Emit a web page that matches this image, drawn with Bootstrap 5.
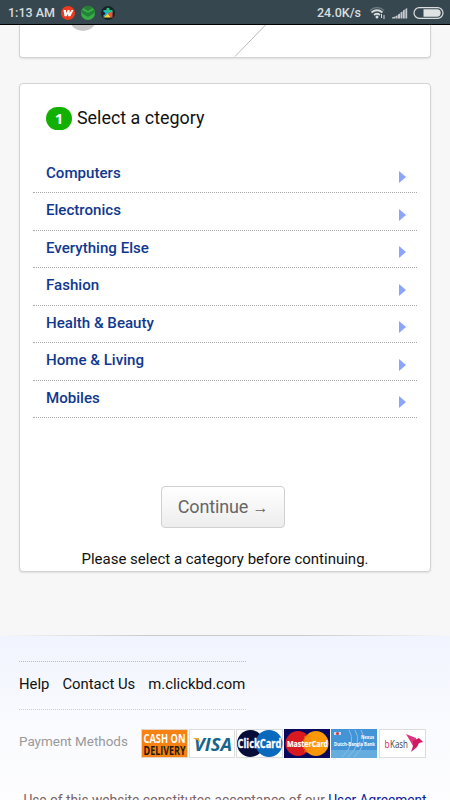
<!DOCTYPE html>
<html lang="en">
<head>
<meta charset="utf-8">
<meta name="viewport" content="width=device-width, initial-scale=1">
<title>ClickBD - Select a category</title>
<link href="https://cdn.jsdelivr.net/npm/bootstrap@5.3.0/dist/css/bootstrap.min.css" rel="stylesheet">
<style>
body{font-family:Roboto,"Liberation Sans",sans-serif;background:#f7f7f7;color:#111;height:800px;font-size:15px;line-height:20px}
a{text-decoration:none}
.status{height:25px;background:#37474f;border-bottom:1px solid #000;color:#d9dddf;font-size:12.5px;font-weight:500;padding:1px 6px 0 8px}
.status svg{display:block;flex:none}
.clock{width:47px;white-space:nowrap;margin-right:6px}
.panel{background:#fff;border:1px solid #d3d3d3;border-radius:4px;margin:0 19px;box-shadow:0 1px 2px rgba(0,0,0,.1)}
.panel-top{height:33px;border-top:0;border-radius:0 0 4px 4px}
.panel-top svg{display:block}
.panel-main{height:489px;margin-top:25px}
.heading{height:34px;padding:0;margin:17px 0 0 26px;font-size:17.9px;font-weight:400}
.step{width:26px;height:23px;border-radius:12px;background:#12b000;color:#fff;font-family:"Open Sans",sans-serif;font-size:15px;font-weight:700;margin-right:5px}
.cats{margin:20.500px 13px 0}
.cat{height:37.5px;border-bottom:1px dotted #aaa;padding:0 11px 2px 13px;color:#10388f;font-size:15.1px;font-weight:500}
.cat svg{margin-top:9px}
.go{width:124px;height:42px;margin:67.500px auto 0 141px;display:block;border:1px solid #d0d0d0;border-radius:4px;background:linear-gradient(#fff,#ededed);color:#666;font-size:18px;padding:0 0 1px;letter-spacing:-.15px}
.go small{font-size:16px}
.hint{margin-top:21px;font-size:15px}
.foot{margin-top:63px;height:165px;background:linear-gradient(#f0f4fe,#f9fafe 50%,#fdfdfe);padding:0 19px}
.edge{height:1px;margin:0 -19px;background:linear-gradient(90deg,#f7f7f7,#c9cbca 33%,#c9cbca 67%,#f7f7f7)}
.links{width:227px;height:49px;margin-top:25px;padding-bottom:3px;border-top:1px dotted #bbb;border-bottom:1px dotted #ccc;gap:13px;white-space:nowrap;font-size:14.85px}
.links a{color:#111}
.pay{margin-top:19px;height:30px;color:#999;font-size:13.45px}
.pay span{padding-bottom:5px}
.pay svg{display:block;margin-left:auto;margin-right:4px}
.terms{margin-top:31px;color:#7b6468;white-space:nowrap;font-size:13.73px;text-align:center}
.terms a{color:#0a1a9c;text-decoration:underline}
</style>
</head>
<body class="d-flex flex-column overflow-hidden">
<header class="status d-flex align-items-center flex-shrink-0">
  <span class="clock">1:13 AM</span>
  <svg width="56" height="16" viewBox="0 0 56 16">
    <circle cx="7" cy="8" r="7" fill="#e93b1f"/><path d="M2.500 5h2.500l.1 3.200L6.800 5h1.700l.2 3.200L10.300 5H12.500l-3.100 6.200H7.200L7 8.500l-1.400 2.700H3.500z" fill="#fff"/>
    <circle cx="27" cy="8" r="7" fill="#36ad45"/><path d="M20.500 4.500 27 8l6.500-3.500V8L27 12l-6.500-4z" fill="#238239"/><path d="M22 2.800 27 6l5-3.200A7 7 0 0 0 22 2.800" fill="#287c35"/>
    <circle cx="47" cy="8" r="7" fill="#172326"/><path d="M42.500 5h3c-1-3 4-3 3 0h3v3l-5 1z" fill="#23c489"/><path d="M42.500 5l4.500 3.500-4.500 4V10c2.500 0 2.500-3 0-3z" fill="#28b4f4"/><path d="M42.500 12.500 47 8.500l3 4z" fill="#fbd536"/><path d="M47 8.500l4.500-2v6H50z" fill="#f15143"/>
  </svg>
  <span class="ms-auto">24.0K/s</span>
  <svg width="75" height="16" viewBox="0 0 75 16" class="ms-2" fill="none">
    <path d="M1 5.500q7-6 14 0" stroke="#69767c" stroke-width="1.500"/><path d="M2.500 7.500q5.500-4.500 11 0M5 10q3-2.500 6 0" stroke="#d9dddf" stroke-width="1.700"/><circle cx="8" cy="12" r="1.500" fill="#d9dddf"/><path d="M12.500 9v4M15 10v4" stroke="#d9dddf"/>
    <path d="M23 13.500V12.500l3-1v2zm3.400 0v-2.200l2.200-1v3.200zm2.600 0V9.500l2-1v5zm2.500 0V7.500l2-1v7zm2.500 0V5.500l1.800-1v9zm2.400 0V4l1.800-1v10.500z" fill="#c5cacd"/>
    <rect x="45" y="2.700" width="29" height="10.600" rx="5.300" stroke="#d9dddf" stroke-width="1.200"/><path d="M54.500 4.300H68a3.700 3.700 0 0 1 0 7.400H54.500z" fill="#e0e3e4"/>
  </svg>
</header>
<main>
  <section class="panel panel-top">
    <svg width="410" height="32" viewBox="0 0 410 32"><ellipse cx="63" cy="-4" rx="12.500" ry="10" fill="#c8c8c8"/><path d="M215 31.500 246-.5" stroke="#bbb"/></svg>
  </section>
  <section class="panel panel-main">
    <h1 class="heading d-flex align-items-center mb-0"><span class="step d-flex align-items-center justify-content-center">1</span>Select a ctegory</h1>
    <nav class="cats">
      <a href="#" class="cat d-flex align-items-center justify-content-between">Computers<svg width="7" height="12"><path d="M0 0 7 6 0 12z" fill="#8ba5ff"/></svg></a>
      <a href="#" class="cat d-flex align-items-center justify-content-between">Electronics<svg width="7" height="12"><path d="M0 0 7 6 0 12z" fill="#8ba5ff"/></svg></a>
      <a href="#" class="cat d-flex align-items-center justify-content-between">Everything Else<svg width="7" height="12"><path d="M0 0 7 6 0 12z" fill="#8ba5ff"/></svg></a>
      <a href="#" class="cat d-flex align-items-center justify-content-between">Fashion<svg width="7" height="12"><path d="M0 0 7 6 0 12z" fill="#8ba5ff"/></svg></a>
      <a href="#" class="cat d-flex align-items-center justify-content-between">Health &amp; Beauty<svg width="7" height="12"><path d="M0 0 7 6 0 12z" fill="#8ba5ff"/></svg></a>
      <a href="#" class="cat d-flex align-items-center justify-content-between">Home &amp; Living<svg width="7" height="12"><path d="M0 0 7 6 0 12z" fill="#8ba5ff"/></svg></a>
      <a href="#" class="cat d-flex align-items-center justify-content-between">Mobiles<svg width="7" height="12"><path d="M0 0 7 6 0 12z" fill="#8ba5ff"/></svg></a>
    </nav>
    <button type="button" class="btn go">Continue <small>→</small></button>
    <p class="hint text-center mb-0">Please select a category before continuing.</p>
  </section>
</main>
<footer class="foot flex-shrink-0">
  <div class="edge"></div>
  <nav class="links d-flex align-items-center"><a href="#">Help</a><a href="#">Contact Us</a><a href="#">m.clickbd.com</a></nav>
  <div class="pay d-flex align-items-center"><span class="text-nowrap">Payment Methods</span>
    <svg width="286" height="30" viewBox="0 0 286 30" font-family="Open Sans, sans-serif" font-weight="700">
      <rect x=".5" y=".5" width="46" height="28" fill="#f58212" stroke="#e4d5c8"/>
      <text x="2.500" y="13.500" font-size="12" fill="#fff" textLength="42" lengthAdjust="spacingAndGlyphs">CASH ON</text>
      <text x="2.500" y="26" font-size="12" fill="#24180e" textLength="42" lengthAdjust="spacingAndGlyphs">DELIVERY</text>
      <rect x="48.500" y=".5" width="45" height="28" fill="#fff" stroke="#ddd"/>
      <text x="53" y="22" font-size="18" font-style="italic" fill="#17658c" textLength="38" lengthAdjust="spacingAndGlyphs">VISA</text><path d="M51.500 9h6l2 5-3-3z" fill="#f5a51c"/>
      <rect x="95.500" y=".5" width="46" height="28" fill="#fff" stroke="#ddd"/>
      <circle cx="109.500" cy="14.500" r="13.500" fill="#080c38"/><circle cx="128" cy="14.500" r="13.500" fill="#0869bd"/>
      <text x="96.500" y="19" font-size="12" fill="#fff" stroke="#fff" stroke-width=".3" textLength="44" lengthAdjust="spacingAndGlyphs">ClickCard</text>
      <rect x="143" width="46" height="29" fill="#08085e"/><circle cx="157" cy="14.500" r="12.500" fill="#d91920"/><circle cx="175" cy="14.500" r="12.500" fill="#fb9806"/>
      <path d="M163 8h7M162 11h8M162 19h8M163 22h7" stroke="#f37d12"/>
      <text x="146" y="18" font-size="9" fill="#fff" stroke="#fff" stroke-width=".2" textLength="41" lengthAdjust="spacingAndGlyphs">MasterCard</text>
      <rect x="190" width="46" height="29" fill="#4394d7"/><path d="M190 21h46v8h-46z" fill="#65addf"/><path d="M201 28Q216 14 208 1M207 28Q222 14 214 1M213 28Q228 14 220 1" fill="none" stroke="#8abbe6"/><path d="M193 3h7v3h-7z" fill="#c3dcec"/><circle cx="196.500" cy="4.500" r="1.500" fill="#cc3549"/>
      <text x="220" y="10" font-size="5" fill="#fff" textLength="13" lengthAdjust="spacingAndGlyphs">Nexus</text>
      <text x="193" y="16.500" font-size="6" fill="#fff" textLength="41" lengthAdjust="spacingAndGlyphs">Dutch-Bangla Bank</text>
      <rect x="238.500" y=".5" width="46" height="28" fill="#fff" stroke="#ddd"/>
      <text x="243.500" y="19" font-size="11" font-weight="400" fill="#e2136e" textLength="5" lengthAdjust="spacingAndGlyphs">b</text><text x="249" y="19" font-size="11" font-weight="400" fill="#444" textLength="18" lengthAdjust="spacingAndGlyphs">Kash</text>
      <path d="M265 5l10 4 1 7-4 1z" fill="#e1367f"/><path d="M272 12l6-3 4 4-4 1-2 4-6 5 2-6z" fill="#d11961"/>
    </svg>
  </div>
  <p class="terms mb-0">Use of this website constitutes acceptance of our <a href="#">User Agreement</a></p>
</footer>
<script src="https://cdn.jsdelivr.net/npm/bootstrap@5.3.0/dist/js/bootstrap.bundle.min.js"></script>
</body>
</html>
